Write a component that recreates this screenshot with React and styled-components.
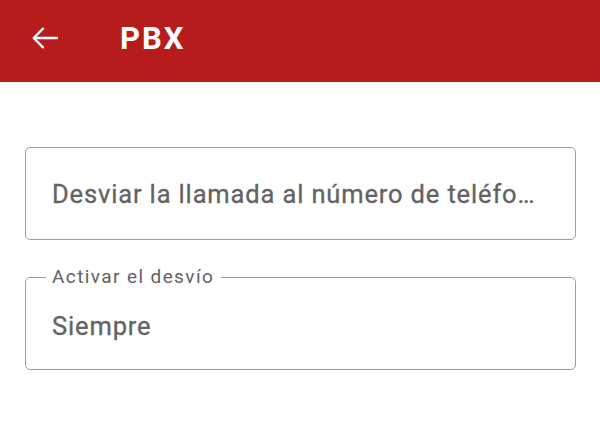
import styled, { createGlobalStyle } from "styled-components";

const Global = createGlobalStyle`
  body {
    margin: 0;
    background: #ffffff;
    font-family: Roboto, "Noto Sans", sans-serif;
  }
`;

const Page = styled.div`
  width: 600px;
  height: 448px;
  background: #ffffff;
`;

const Header = styled.header`
  height: 82px;
  background-color: #b71c1c;
  display: flex;
  align-items: center;
  padding: 0 0 6px 28px;
  box-sizing: border-box;
`;

const BackButton = styled.button`
  background: none;
  border: none;
  padding: 0;
  width: 34px;
  height: 34px;
  display: flex;
  align-items: center;
  justify-content: center;
  margin-right: 58px;
  cursor: pointer;
`;

const Title = styled.h1`
  margin: 0;
  color: #ffffff;
  font-size: 31px;
  font-weight: 700;
  letter-spacing: 2px;
`;

const Form = styled.div`
  display: flex;
  flex-direction: column;
  gap: 37px;
  padding: 65px 24px 0 25px;
`;

const Field = styled.div`
  height: 93px;
  box-sizing: border-box;
  border: 1.5px solid #9e9e9e;
  border-radius: 5px;
  padding: 0 26px 0 26px;
  display: flex;
  align-items: center;
  position: relative;
  min-width: 0;
`;

const Label = styled.span`
  position: absolute;
  top: -14px;
  left: 20px;
  padding: 0 7px 0 6px;
  background: #ffffff;
  font-size: 19px;
  color: #616161;
  letter-spacing: 1.4px;
  line-height: 26px;
`;

const Value = styled.div`
  font-size: 25.5px;
  color: #636363;
  white-space: nowrap;
  overflow: hidden;
  text-overflow: ellipsis;
  letter-spacing: 0.85px;
  -webkit-text-stroke: 0.3px #636363;
  padding-top: ${(props) => (props.$labelled ? "4px" : "0")};
`;

export default function App() {
  return (
    <Page>
      <Global />
      <Header>
        <BackButton>
          <svg width="32" height="32" viewBox="0 0 24 24" fill="none">
            <path
              d="M21 12H3.5M10.5 5l-7 7 7 7"
              stroke="#ffffff"
              strokeWidth="1.7"
              strokeLinecap="round"
              strokeLinejoin="round"
            />
          </svg>
        </BackButton>
        <Title>PBX</Title>
      </Header>
      <Form>
        <Field>
          <Value>Desviar la llamada al número de teléfono al que se desvía</Value>
        </Field>
        <Field>
          <Label>Activar el desvío</Label>
          <Value $labelled>Siempre</Value>
        </Field>
      </Form>
    </Page>
  );
}
